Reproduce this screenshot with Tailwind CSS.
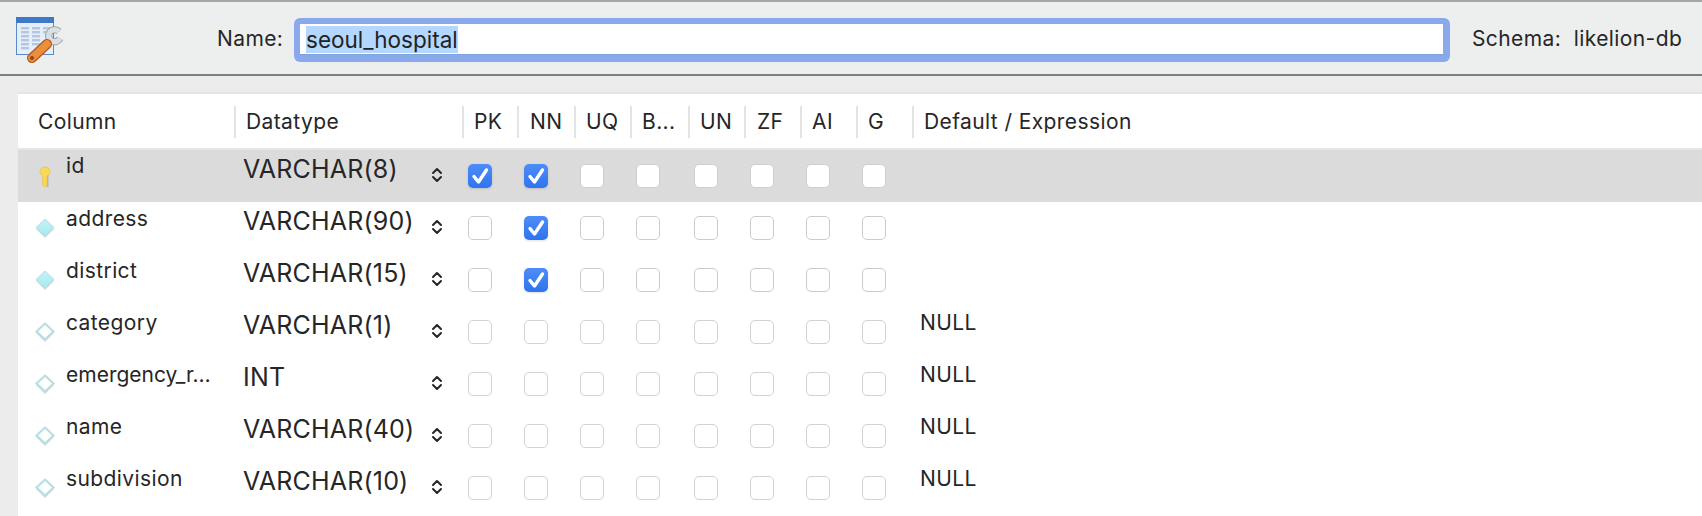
<!DOCTYPE html>
<html>
<head>
<meta charset="utf-8">
<script src="https://cdn.jsdelivr.net/npm/@tailwindcss/browser@4"></script>
</head>
<body class="m-0 w-[1702px] h-[516px] overflow-hidden bg-[#ececec] font-['Inter',sans-serif] text-[#262626]">
<svg width="0" height="0" class="absolute">
  <defs>
    <linearGradient id="dia" x1="0" y1="0" x2="0" y2="1"><stop offset="0" stop-color="#c4f1f6"/><stop offset="1" stop-color="#a2ecf3"/></linearGradient>
    <symbol id="fill" viewBox="0 0 20 21"><path d="M10 3 L19 11 L10 20 L1 11Z" fill="#8f9f9f" opacity=".4"/><path d="M10 1 L19 9.500 L10 18 L1 9.500Z" fill="url(#dia)" stroke="#b9dde0" stroke-width="1"/></symbol>
    <symbol id="empty" viewBox="0 0 20 21"><path d="M10 3 L19 11 L10 20 L1 11Z" fill="#8f9f9f" opacity=".4"/><path d="M10 1.500 L18.500 9.500 L10 17.500 L1.500 9.500Z" fill="#fff" stroke="#b4dee1" stroke-width="2"/></symbol>
    <symbol id="chev" viewBox="0 0 12 18"><path d="M2 7 L6 3 L10 7 M2 11 L6 15 L10 11" fill="none" stroke="#262626" stroke-width="2" stroke-linecap="round" stroke-linejoin="round"/></symbol>
    <symbol id="chk" viewBox="0 0 24 24"><path d="M6 12.500 L10.500 18 L18.500 6" fill="none" stroke="#fff" stroke-width="3.400" stroke-linecap="round" stroke-linejoin="round"/></symbol>
  </defs>
</svg>

<div class="h-[2px] bg-[#a6a6a6]"></div>
<header class="h-[72px] bg-[#edefef] flex items-start relative">
  <svg class="ml-[15px] mt-[15px] shrink-0" width="48" height="48" viewBox="0 0 48 48">
    <rect x="1.500" y="0.500" width="37" height="37" fill="#e6eef9" stroke="#5a88c9"/>
    <rect x="1" y="0" width="38" height="6" fill="#3f78c8"/>
    <g fill="#b3c7e2">
      <rect x="6" y="10" width="8" height="2.400"/><rect x="6" y="14" width="8" height="2.400"/><rect x="6" y="18" width="8" height="2.400"/><rect x="6" y="22" width="8" height="2.400"/><rect x="6" y="26" width="8" height="2.400"/><rect x="6" y="30" width="8" height="2.400"/>
      <rect x="17" y="10" width="8" height="2.400"/><rect x="17" y="14" width="8" height="2.400"/><rect x="17" y="18" width="8" height="2.400"/><rect x="17" y="22" width="8" height="2.400"/><rect x="17" y="26" width="8" height="2.400"/>
      <rect x="28" y="10" width="7" height="2.400"/><rect x="28" y="14" width="7" height="2.400"/>
    </g>
    <path d="M44 14.500 A6 6 0 1 0 45 21.500" fill="none" stroke="#8b939b" stroke-width="7"/>
    <path d="M44 14.500 A6 6 0 1 0 45 21.500" fill="none" stroke="#dcdfe2" stroke-width="5.500"/>
    <path d="M17 41 L32 27" stroke="#b4581d" stroke-width="10" stroke-linecap="round"/>
    <path d="M17 41 L32 27" stroke="#ea8f3e" stroke-width="7.500" stroke-linecap="round"/>
    <circle cx="17" cy="41" r="2" fill="#8a4a18"/>
  </svg>
  <label class="ml-[154px] mt-[25px] w-[77px] text-[21px] leading-[24px] tracking-[0.4px]">Name:</label>
  <div class="mt-[16px] w-[1156px] h-[44px] rounded-[6px] bg-[#8aa9ec] p-[6px] pb-[7px] pr-[7px]">
    <div class="h-full bg-white border-b border-[#7ea3d8] pl-[6px] pt-[2px]">
      <span class="block w-fit bg-[#b3d7ff] text-[22.500px] leading-[27px] text-[#222]">seoul_hospital</span>
    </div>
  </div>
  <div class="ml-[22px] mt-[25px] text-[21px] leading-[24px] tracking-[0.4px] whitespace-pre">Schema:  likelion-db</div>
</header>
<div class="h-[2px] bg-[#7f7f7f]"></div>

<main class="mt-[16px] ml-[18px] bg-white border-t-2 border-[#e4e4e4]">
  <!-- header -->
  <div class="grid grid-cols-[216px_228px_55px_57px_56px_58px_56px_56px_56px_56px_1fr] h-[56px] border-b-2 border-[#e6e6e6] text-[21px] tracking-[0.4px] items-center">
    <div class="pl-[20px] mt-[2px]">Column</div>
    <div class="h-[32px] mt-[2px] border-l-2 border-[#e3e3e3] pl-[10px] leading-[32px]">Datatype</div>
    <div class="h-[32px] mt-[2px] border-l-2 border-[#e3e3e3] pl-[10px] leading-[32px]">PK</div>
    <div class="h-[32px] mt-[2px] border-l-2 border-[#e3e3e3] pl-[11px] leading-[32px]">NN</div>
    <div class="h-[32px] mt-[2px] border-l-2 border-[#e3e3e3] pl-[10px] leading-[32px]">UQ</div>
    <div class="h-[32px] mt-[2px] border-l-2 border-[#e3e3e3] pl-[10px] leading-[32px]">B...</div>
    <div class="h-[32px] mt-[2px] border-l-2 border-[#e3e3e3] pl-[10px] leading-[32px]">UN</div>
    <div class="h-[32px] mt-[2px] border-l-2 border-[#e3e3e3] pl-[11px] leading-[32px]">ZF</div>
    <div class="h-[32px] mt-[2px] border-l-2 border-[#e3e3e3] pl-[10px] leading-[32px]">AI</div>
    <div class="h-[32px] mt-[2px] border-l-2 border-[#e3e3e3] pl-[10px] leading-[32px]">G</div>
    <div class="h-[32px] mt-[2px] border-l-2 border-[#e3e3e3] pl-[10px] leading-[32px]">Default / Expression</div>
  </div>

  <!-- id -->
  <div class="grid grid-cols-[216px_228px_55px_57px_56px_58px_56px_56px_56px_56px_1fr] h-[52px] bg-[#dbdbdb]">
    <div class="relative pl-[48px] pt-[4px] text-[21px] tracking-[0.4px] leading-[24px]">
      <svg class="absolute left-[17px] top-[15px]" width="20" height="24" viewBox="0 0 20 24"><path d="M12.500 10 L12.500 22" stroke="#b5b5b5" stroke-width="2"/><path d="M10 2 C6.500 2 5 4.500 5 7 C5 9.500 7 10.500 7.800 11 L7.500 20 L10 22 L12 20 L11.800 11 C13 10.500 15 9.500 15 7 C15 4.500 13.500 2 10 2Z" fill="#f7d858" stroke="#e8c23a" stroke-width=".7"/></svg>
      id
    </div>
    <div class="flex pl-[9px] pt-[6px] text-[25px] tracking-[0.2px] leading-[26px] relative">VARCHAR(8)<svg class="absolute left-[197px] top-[16px]" width="12" height="18"><use href="#chev"/></svg></div>
    <div class="pl-[6px] pt-[14px]"><div class="size-6 rounded-[5px] bg-gradient-to-b from-[#4d8df8] to-[#2f74ee] shadow-sm"><svg width="24" height="24"><use href="#chk"/></svg></div></div>
    <div class="pl-[7px] pt-[14px]"><div class="size-6 rounded-[5px] bg-gradient-to-b from-[#4d8df8] to-[#2f74ee] shadow-sm"><svg width="24" height="24"><use href="#chk"/></svg></div></div>
    <div class="pl-[6px] pt-[14px]"><div class="size-6 rounded-[5px] bg-white border border-[#cfcfcf]"></div></div>
    <div class="pl-[6px] pt-[14px]"><div class="size-6 rounded-[5px] bg-white border border-[#cfcfcf]"></div></div>
    <div class="pl-[6px] pt-[14px]"><div class="size-6 rounded-[5px] bg-white border border-[#cfcfcf]"></div></div>
    <div class="pl-[6px] pt-[14px]"><div class="size-6 rounded-[5px] bg-white border border-[#cfcfcf]"></div></div>
    <div class="pl-[6px] pt-[14px]"><div class="size-6 rounded-[5px] bg-white border border-[#cfcfcf]"></div></div>
    <div class="pl-[6px] pt-[14px]"><div class="size-6 rounded-[5px] bg-white border border-[#cfcfcf]"></div></div>
    <div></div>
  </div>

  <!-- address -->
  <div class="grid grid-cols-[216px_228px_55px_57px_56px_58px_56px_56px_56px_56px_1fr] h-[52px]">
    <div class="relative pl-[48px] pt-[5px] text-[21px] tracking-[0.4px] leading-[24px]"><svg class="absolute left-[17px] top-[16px]" width="20" height="21"><use href="#fill"/></svg>address</div>
    <div class="flex pl-[9px] pt-[6px] text-[25px] tracking-[0.2px] leading-[26px] relative">VARCHAR(90)<svg class="absolute left-[197px] top-[16px]" width="12" height="18"><use href="#chev"/></svg></div>
    <div class="pl-[6px] pt-[14px]"><div class="size-6 rounded-[5px] bg-white border border-[#cccccc]"></div></div>
    <div class="pl-[7px] pt-[14px]"><div class="size-6 rounded-[5px] bg-gradient-to-b from-[#4d8df8] to-[#2f74ee] shadow-sm"><svg width="24" height="24"><use href="#chk"/></svg></div></div>
    <div class="pl-[6px] pt-[14px]"><div class="size-6 rounded-[5px] bg-white border border-[#cccccc]"></div></div>
    <div class="pl-[6px] pt-[14px]"><div class="size-6 rounded-[5px] bg-white border border-[#cccccc]"></div></div>
    <div class="pl-[6px] pt-[14px]"><div class="size-6 rounded-[5px] bg-white border border-[#cccccc]"></div></div>
    <div class="pl-[6px] pt-[14px]"><div class="size-6 rounded-[5px] bg-white border border-[#cccccc]"></div></div>
    <div class="pl-[6px] pt-[14px]"><div class="size-6 rounded-[5px] bg-white border border-[#cccccc]"></div></div>
    <div class="pl-[6px] pt-[14px]"><div class="size-6 rounded-[5px] bg-white border border-[#cccccc]"></div></div>
    <div></div>
  </div>

  <!-- district -->
  <div class="grid grid-cols-[216px_228px_55px_57px_56px_58px_56px_56px_56px_56px_1fr] h-[52px]">
    <div class="relative pl-[48px] pt-[5px] text-[21px] tracking-[0.4px] leading-[24px]"><svg class="absolute left-[17px] top-[16px]" width="20" height="21"><use href="#fill"/></svg>district</div>
    <div class="flex pl-[9px] pt-[6px] text-[25px] tracking-[0.2px] leading-[26px] relative">VARCHAR(15)<svg class="absolute left-[197px] top-[16px]" width="12" height="18"><use href="#chev"/></svg></div>
    <div class="pl-[6px] pt-[14px]"><div class="size-6 rounded-[5px] bg-white border border-[#cccccc]"></div></div>
    <div class="pl-[7px] pt-[14px]"><div class="size-6 rounded-[5px] bg-gradient-to-b from-[#4d8df8] to-[#2f74ee] shadow-sm"><svg width="24" height="24"><use href="#chk"/></svg></div></div>
    <div class="pl-[6px] pt-[14px]"><div class="size-6 rounded-[5px] bg-white border border-[#cccccc]"></div></div>
    <div class="pl-[6px] pt-[14px]"><div class="size-6 rounded-[5px] bg-white border border-[#cccccc]"></div></div>
    <div class="pl-[6px] pt-[14px]"><div class="size-6 rounded-[5px] bg-white border border-[#cccccc]"></div></div>
    <div class="pl-[6px] pt-[14px]"><div class="size-6 rounded-[5px] bg-white border border-[#cccccc]"></div></div>
    <div class="pl-[6px] pt-[14px]"><div class="size-6 rounded-[5px] bg-white border border-[#cccccc]"></div></div>
    <div class="pl-[6px] pt-[14px]"><div class="size-6 rounded-[5px] bg-white border border-[#cccccc]"></div></div>
    <div></div>
  </div>

  <!-- category -->
  <div class="grid grid-cols-[216px_228px_55px_57px_56px_58px_56px_56px_56px_56px_1fr] h-[52px]">
    <div class="relative pl-[48px] pt-[5px] text-[21px] tracking-[0.4px] leading-[24px]"><svg class="absolute left-[17px] top-[16px]" width="20" height="21"><use href="#empty"/></svg>category</div>
    <div class="flex pl-[9px] pt-[6px] text-[25px] tracking-[0.2px] leading-[26px] relative">VARCHAR(1)<svg class="absolute left-[197px] top-[16px]" width="12" height="18"><use href="#chev"/></svg></div>
    <div class="pl-[6px] pt-[14px]"><div class="size-6 rounded-[5px] bg-white border border-[#d2d2d2]"></div></div>
    <div class="pl-[7px] pt-[14px]"><div class="size-6 rounded-[5px] bg-white border border-[#d2d2d2]"></div></div>
    <div class="pl-[6px] pt-[14px]"><div class="size-6 rounded-[5px] bg-white border border-[#d2d2d2]"></div></div>
    <div class="pl-[6px] pt-[14px]"><div class="size-6 rounded-[5px] bg-white border border-[#d2d2d2]"></div></div>
    <div class="pl-[6px] pt-[14px]"><div class="size-6 rounded-[5px] bg-white border border-[#d2d2d2]"></div></div>
    <div class="pl-[6px] pt-[14px]"><div class="size-6 rounded-[5px] bg-white border border-[#d2d2d2]"></div></div>
    <div class="pl-[6px] pt-[14px]"><div class="size-6 rounded-[5px] bg-white border border-[#d2d2d2]"></div></div>
    <div class="pl-[6px] pt-[14px]"><div class="size-6 rounded-[5px] bg-white border border-[#d2d2d2]"></div></div>
    <div class="pl-[8px] pt-[5px] text-[21px] tracking-[0.4px] leading-[24px]">NULL</div>
  </div>

  <!-- emergency -->
  <div class="grid grid-cols-[216px_228px_55px_57px_56px_58px_56px_56px_56px_56px_1fr] h-[52px]">
    <div class="relative pl-[48px] pt-[5px] text-[21px] tracking-[0px] leading-[24px]"><svg class="absolute left-[17px] top-[16px]" width="20" height="21"><use href="#empty"/></svg>emergency_r…</div>
    <div class="flex pl-[9px] pt-[6px] text-[25px] tracking-[0.2px] leading-[26px] relative">INT<svg class="absolute left-[197px] top-[16px]" width="12" height="18"><use href="#chev"/></svg></div>
    <div class="pl-[6px] pt-[14px]"><div class="size-6 rounded-[5px] bg-white border border-[#d2d2d2]"></div></div>
    <div class="pl-[7px] pt-[14px]"><div class="size-6 rounded-[5px] bg-white border border-[#d2d2d2]"></div></div>
    <div class="pl-[6px] pt-[14px]"><div class="size-6 rounded-[5px] bg-white border border-[#d2d2d2]"></div></div>
    <div class="pl-[6px] pt-[14px]"><div class="size-6 rounded-[5px] bg-white border border-[#d2d2d2]"></div></div>
    <div class="pl-[6px] pt-[14px]"><div class="size-6 rounded-[5px] bg-white border border-[#d2d2d2]"></div></div>
    <div class="pl-[6px] pt-[14px]"><div class="size-6 rounded-[5px] bg-white border border-[#d2d2d2]"></div></div>
    <div class="pl-[6px] pt-[14px]"><div class="size-6 rounded-[5px] bg-white border border-[#d2d2d2]"></div></div>
    <div class="pl-[6px] pt-[14px]"><div class="size-6 rounded-[5px] bg-white border border-[#d2d2d2]"></div></div>
    <div class="pl-[8px] pt-[5px] text-[21px] tracking-[0.4px] leading-[24px]">NULL</div>
  </div>

  <!-- name -->
  <div class="grid grid-cols-[216px_228px_55px_57px_56px_58px_56px_56px_56px_56px_1fr] h-[52px]">
    <div class="relative pl-[48px] pt-[5px] text-[21px] tracking-[0.4px] leading-[24px]"><svg class="absolute left-[17px] top-[16px]" width="20" height="21"><use href="#empty"/></svg>name</div>
    <div class="flex pl-[9px] pt-[6px] text-[25px] tracking-[0.2px] leading-[26px] relative">VARCHAR(40)<svg class="absolute left-[197px] top-[16px]" width="12" height="18"><use href="#chev"/></svg></div>
    <div class="pl-[6px] pt-[14px]"><div class="size-6 rounded-[5px] bg-white border border-[#d2d2d2]"></div></div>
    <div class="pl-[7px] pt-[14px]"><div class="size-6 rounded-[5px] bg-white border border-[#d2d2d2]"></div></div>
    <div class="pl-[6px] pt-[14px]"><div class="size-6 rounded-[5px] bg-white border border-[#d2d2d2]"></div></div>
    <div class="pl-[6px] pt-[14px]"><div class="size-6 rounded-[5px] bg-white border border-[#d2d2d2]"></div></div>
    <div class="pl-[6px] pt-[14px]"><div class="size-6 rounded-[5px] bg-white border border-[#d2d2d2]"></div></div>
    <div class="pl-[6px] pt-[14px]"><div class="size-6 rounded-[5px] bg-white border border-[#d2d2d2]"></div></div>
    <div class="pl-[6px] pt-[14px]"><div class="size-6 rounded-[5px] bg-white border border-[#d2d2d2]"></div></div>
    <div class="pl-[6px] pt-[14px]"><div class="size-6 rounded-[5px] bg-white border border-[#d2d2d2]"></div></div>
    <div class="pl-[8px] pt-[5px] text-[21px] tracking-[0.4px] leading-[24px]">NULL</div>
  </div>

  <!-- subdivision -->
  <div class="grid grid-cols-[216px_228px_55px_57px_56px_58px_56px_56px_56px_56px_1fr] h-[52px]">
    <div class="relative pl-[48px] pt-[5px] text-[21px] tracking-[0.4px] leading-[24px]"><svg class="absolute left-[17px] top-[16px]" width="20" height="21"><use href="#empty"/></svg>subdivision</div>
    <div class="flex pl-[9px] pt-[6px] text-[25px] tracking-[0.2px] leading-[26px] relative">VARCHAR(10)<svg class="absolute left-[197px] top-[16px]" width="12" height="18"><use href="#chev"/></svg></div>
    <div class="pl-[6px] pt-[14px]"><div class="size-6 rounded-[5px] bg-white border border-[#d2d2d2]"></div></div>
    <div class="pl-[7px] pt-[14px]"><div class="size-6 rounded-[5px] bg-white border border-[#d2d2d2]"></div></div>
    <div class="pl-[6px] pt-[14px]"><div class="size-6 rounded-[5px] bg-white border border-[#d2d2d2]"></div></div>
    <div class="pl-[6px] pt-[14px]"><div class="size-6 rounded-[5px] bg-white border border-[#d2d2d2]"></div></div>
    <div class="pl-[6px] pt-[14px]"><div class="size-6 rounded-[5px] bg-white border border-[#d2d2d2]"></div></div>
    <div class="pl-[6px] pt-[14px]"><div class="size-6 rounded-[5px] bg-white border border-[#d2d2d2]"></div></div>
    <div class="pl-[6px] pt-[14px]"><div class="size-6 rounded-[5px] bg-white border border-[#d2d2d2]"></div></div>
    <div class="pl-[6px] pt-[14px]"><div class="size-6 rounded-[5px] bg-white border border-[#d2d2d2]"></div></div>
    <div class="pl-[8px] pt-[5px] text-[21px] tracking-[0.4px] leading-[24px]">NULL</div>
  </div>
  <div class="h-[20px]"></div>
</main>
</body>
</html>
